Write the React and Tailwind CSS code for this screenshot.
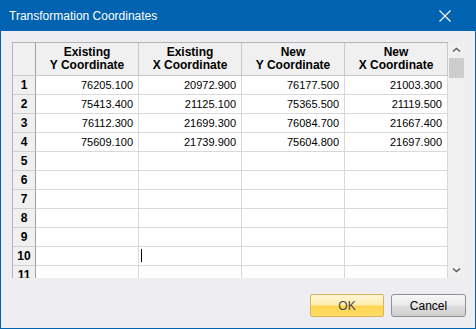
import React from 'react'

// Rows of the transformation table; empty rows fill out the grid
const rows = [
  ['76205.100', '20972.900', '76177.500', '21003.300'],
  ['75413.400', '21125.100', '75365.500', '21119.500'],
  ['76112.300', '21699.300', '76084.700', '21667.400'],
  ['75609.100', '21739.900', '75604.800', '21697.900'],
  ['', '', '', ''],
  ['', '', '', ''],
  ['', '', '', ''],
  ['', '', '', ''],
  ['', '', '', ''],
  ['', '', '', ''],
  ['', '', '', ''],
]

const headers = [
  ['Existing', 'Y Coordinate'],
  ['Existing', 'X Coordinate'],
  ['New', 'Y Coordinate'],
  ['New', 'X Coordinate'],
]

function Chevron({ down }) {
  return (
    <svg width="9" height="6" viewBox="0 0 9 6" className="text-[#606060]">
      <path
        d={down ? 'M1 1.5 L4.5 4.5 L8 1.5' : 'M1 4.5 L4.5 1.5 L8 4.5'}
        fill="none"
        stroke="currentColor"
        strokeWidth="1.6"
      />
    </svg>
  )
}

export default function App() {
  return (
    <div className="w-[476px] h-[329px] flex flex-col bg-[#0063B1] font-['Liberation_Sans',Arial,sans-serif]">
      {/* Title bar */}
      <div className="h-[31px] shrink-0 flex items-center justify-between pl-[9px] pr-[25px] text-white text-[12px]">
        <span>Transformation Coordinates</span>
        <svg width="12" height="12" viewBox="0 0 12 12">
          <path d="M0.5 0.5 L11.5 11.5 M11.5 0.5 L0.5 11.5" stroke="white" strokeWidth="1.1" />
        </svg>
      </div>

      {/* Dialog body */}
      <div className="flex-1 mx-px mb-px bg-[#EEEEF2] flex flex-col pl-[11px] pr-[9px] pt-[11px]">
        <div className="flex h-[236px] w-[453px]">
          <div className="w-[436px] h-full overflow-hidden border-l border-t border-[#B4B4B4] bg-white">
            {/* Column headers */}
            <div className="flex h-[33px] bg-[#F0F0F0] border-b border-[#C8C8C8]">
              <div className="w-[23px] border-r border-[#A0A0A0]" />
              {headers.map((h, i) => (
                <div
                  key={i}
                  className="w-[103px] border-r border-[#C8C8C8] flex flex-col items-center justify-center text-[12px] leading-[13px] font-bold text-black"
                >
                  <span>{h[0]}</span>
                  <span>{h[1]}</span>
                </div>
              ))}
            </div>

            {/* Data rows */}
            {rows.map((r, i) => (
              <div key={i} className="flex h-[19px] shrink-0">
                <div className="w-[23px] bg-[#F0F0F0] border-r border-b border-r-[#A0A0A0] border-b-[#D0D0D0] flex items-center justify-center text-[12px] font-bold text-black">
                  {i + 1}
                </div>
                {r.map((v, j) => (
                  <div
                    key={j}
                    className="relative w-[103px] border-r border-b border-[#D9D9D9] flex items-center justify-end pr-[5px] text-[11px] text-black"
                  >
                    {v}
                    {i === 9 && j === 1 && (
                      <span className="absolute left-[2px] top-[2px] w-px h-[13px] bg-black" />
                    )}
                  </div>
                ))}
              </div>
            ))}
          </div>

          {/* Vertical scrollbar */}
          <div className="w-[17px] h-full bg-[#F0F0F0] flex flex-col items-center">
            <div className="h-[16px] flex items-center justify-center">
              <Chevron />
            </div>
            <div className="w-[15px] h-[20px] bg-[#CDCDCD]" />
            <div className="flex-1" />
            <div className="h-[17px] flex items-center justify-center">
              <Chevron down />
            </div>
          </div>
        </div>

        {/* Buttons */}
        <div className="mt-[16px] flex justify-end gap-[7px]">
          <button className="w-[74px] h-[23px] rounded-[2px] border border-[#D9B65A] bg-[linear-gradient(to_bottom,#FFF6D6_0%,#FFEDB0_45%,#FFD551_55%,#FFDC6A_100%)] text-[12px] text-[#444]">
            OK
          </button>
          <button className="w-[75px] h-[23px] rounded-[3px] border border-[#8E8F8F] bg-[linear-gradient(to_bottom,#F6F6F6_0%,#EBEBEB_45%,#DDDDDD_55%,#CFCFCF_100%)] text-[12px] text-black">
            Cancel
          </button>
        </div>
      </div>
    </div>
  )
}
